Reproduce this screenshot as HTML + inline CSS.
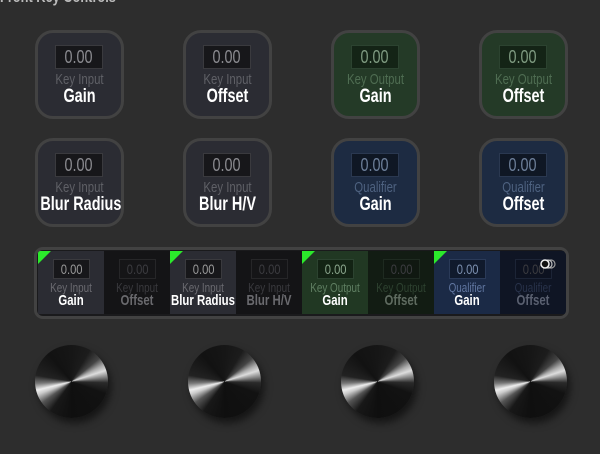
<!DOCTYPE html>
<html><head><style>
*{margin:0;padding:0;box-sizing:border-box}
body{width:600px;height:454px;background:#2d2d2d;position:relative;overflow:hidden;font-family:"Liberation Sans",sans-serif}
.top{position:absolute;left:0;top:-11px;color:#bbb;font-size:16px;font-weight:bold;transform:scaleX(.8);transform-origin:left}
.btn{position:absolute;width:89px;height:89px;border:3px solid #424242;border-radius:18px;background:#2b2c33;text-align:center}
.btn .v{position:absolute;left:17px;top:12px;width:48px;height:24px;background:#17171a;border:1px solid #3a3a3e;color:#8a8a8f;font-size:18px;line-height:22px}
.btn .v span,.c .v span{display:inline-block;transform:scaleX(.8)}
.l,.m{white-space:nowrap;transform:scaleX(.76);transform-origin:center}
.btn .l{position:absolute;left:-10px;right:-10px;top:39px;color:#5f6066;font-size:15px;line-height:15px}
.btn .m{position:absolute;left:-10px;right:-10px;top:54px;color:#fff;font-size:19px;font-weight:bold;line-height:19px}
.g{background:#243a27}.g .v{background:#142416;border-color:#2c4330;color:#7e9a80}.g .l{color:#4f6d52}
.b{background:#1d2b42}.b .v{background:#0f1724;border-color:#2a3850;color:#6c7e98}.b .l{color:#4e6280}
.strip{position:absolute;left:34px;top:247px;width:535px;height:72px;border:3px solid #424242;border-radius:9px;background:#1a1a1c;overflow:hidden}
.c{position:absolute;top:1px;width:66px;height:63px;text-align:center}
.c .v{position:absolute;left:15px;top:8px;width:37px;height:20px;border:1px solid #3a3a3e;background:#17171a;color:#999;font-size:14px;line-height:18px}
.c .l{position:absolute;left:-10px;right:-10px;top:30px;font-size:13px;line-height:13px;color:#6a6a70}
.c .m{position:absolute;left:-10px;right:-10px;top:42px;font-size:15px;font-weight:bold;line-height:15px;color:#fff}
.c.off .v{color:#3c3c40;background:#151517;border-color:#262628}.c.off .l{color:#3a3a3e}.c.off .m{color:#6a6a6e}
.tri{position:absolute;left:0;top:0;width:0;height:0;border-top:13px solid #2bea2b;border-right:13px solid transparent}
.knob{position:absolute;width:73px;height:73px;border-radius:50%;
background:conic-gradient(from 0deg,#161616 0deg,#1c1c1c 30deg,#444 50deg,#aaa 63deg,#ddd 72deg,#888 82deg,#2a2a2a 92deg,#121212 110deg,#0f0f0f 180deg,#181818 215deg,#555 234deg,#ccc 249deg,#eee 256deg,#777 267deg,#222 280deg,#121212 320deg,#161616 360deg);
box-shadow:3px 5px 8px rgba(0,0,0,.55)}
</style></head><body>
<div class="top">Front Key Controls</div>

<div class="btn" style="left:35px;top:30px"><div class="v"><span>0.00</span></div><div class="l">Key Input</div><div class="m">Gain</div></div>
<div class="btn" style="left:183px;top:30px"><div class="v"><span>0.00</span></div><div class="l">Key Input</div><div class="m">Offset</div></div>
<div class="btn g" style="left:331px;top:30px"><div class="v"><span>0.00</span></div><div class="l">Key Output</div><div class="m">Gain</div></div>
<div class="btn g" style="left:479px;top:30px"><div class="v"><span>0.00</span></div><div class="l">Key Output</div><div class="m">Offset</div></div>
<div class="btn" style="left:35px;top:138px"><div class="v"><span>0.00</span></div><div class="l">Key Input</div><div class="m">Blur Radius</div></div>
<div class="btn" style="left:183px;top:138px"><div class="v"><span>0.00</span></div><div class="l">Key Input</div><div class="m">Blur H/V</div></div>
<div class="btn b" style="left:331px;top:138px"><div class="v"><span>0.00</span></div><div class="l">Qualifier</div><div class="m">Gain</div></div>
<div class="btn b" style="left:479px;top:138px"><div class="v"><span>0.00</span></div><div class="l">Qualifier</div><div class="m">Offset</div></div>

<div class="strip">
<div class="c" style="left:1px;background:#2b2c33"><div class="tri"></div><div class="v"><span>0.00</span></div><div class="l">Key Input</div><div class="m">Gain</div></div>
<div class="c off" style="left:67px;background:#141416"><div class="v"><span>0.00</span></div><div class="l">Key Input</div><div class="m">Offset</div></div>
<div class="c" style="left:133px;background:#2b2c33"><div class="tri"></div><div class="v"><span>0.00</span></div><div class="l">Key Input</div><div class="m">Blur Radius</div></div>
<div class="c off" style="left:199px;background:#141416"><div class="v"><span>0.00</span></div><div class="l">Key Input</div><div class="m">Blur H/V</div></div>
<div class="c" style="left:265px;background:#213823"><div class="tri"></div><div class="v" style="background:#132314;border-color:#2c4330;color:#8aa58c"><span>0.00</span></div><div class="l" style="color:#5f7f62">Key Output</div><div class="m">Gain</div></div>
<div class="c off" style="left:331px;background:#121c13"><div class="v" style="background:#101811;border-color:#1e2a20"><span>0.00</span></div><div class="l" style="color:#2e4230">Key Output</div><div class="m" style="color:#5f6b60">Offset</div></div>
<div class="c" style="left:397px;background:#1b2a46"><div class="tri"></div><div class="v" style="background:#101a2c;border-color:#2a3a58;color:#7c90b0"><span>0.00</span></div><div class="l" style="color:#6076a0">Qualifier</div><div class="m">Gain</div></div>
<div class="c off" style="left:463px;background:#0f1524"><div class="v" style="background:#0d1220;border-color:#1c2436"><span>0.00</span></div><div class="l" style="color:#28324a">Qualifier</div><div class="m" style="color:#5a6070">Offset</div>
<svg style="position:absolute;left:40px;top:8px" width="16" height="10" viewBox="0 0 16 10"><circle cx="11" cy="5" r="4" fill="none" stroke="#999" stroke-width="1.2"/><circle cx="8" cy="5" r="4" fill="none" stroke="#bbb" stroke-width="1.2"/><circle cx="5" cy="5" r="4" fill="#111" stroke="#eee" stroke-width="1.5"/></svg></div>
</div>

<div class="knob" style="left:35px;top:345px"></div>
<div class="knob" style="left:188px;top:345px"></div>
<div class="knob" style="left:341px;top:345px"></div>
<div class="knob" style="left:494px;top:345px"></div>
</body></html>
